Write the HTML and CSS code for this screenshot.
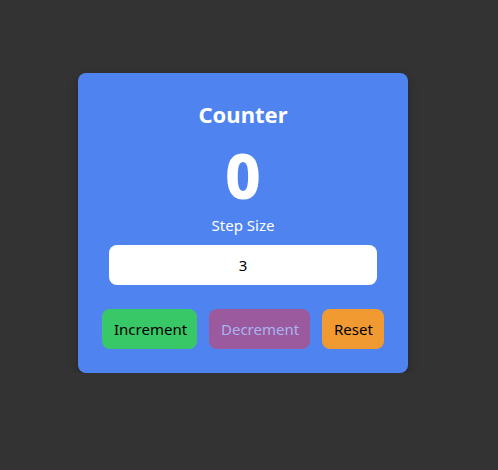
FILE: index.html
```html
<!DOCTYPE html>
<html>
<head>
<meta charset="utf-8">
<link rel="stylesheet" href="styles.css">
</head>
<body>
<div class="page">
  <div class="card">
    <h1 class="title">Counter</h1>
    <div class="count">0</div>
    <label class="label" for="step">Step Size</label>
    <input id="step" class="step" type="number" value="3">
    <div class="buttons">
      <button class="btn inc">Increment</button>
      <button class="btn dec">Decrement</button>
      <button class="btn reset">Reset</button>
    </div>
  </div>
</div>
</body>
</html>
```
FILE: styles.css
```css
html, body {
  margin: 0;
  padding: 0;
  background: #333333;
  font-family: "Noto Sans", "Open Sans", sans-serif;
}
.page {
  padding-top: 73px;
  padding-left: 78px;
}
.card {
  width: 330px;
  height: 300px;
  box-sizing: border-box;
  background: #4f84f0;
  border-radius: 8px;
  box-shadow: 0 4px 10px rgba(0,0,0,0.25);
  display: flex;
  flex-direction: column;
  align-items: center;
  padding-top: 25px;
  color: #ffffff;
}
.title {
  margin: 0;
  font-size: 22px;
  font-weight: 700;
  line-height: 32px;
}
.count {
  margin-top: 13px;
  font-size: 62px;
  font-weight: 800;
  line-height: 64px;
}
.label {
  margin-top: 7px;
  font-size: 15px;
  line-height: 22px;
}
.step {
  margin-top: 9px;
  width: 268px;
  height: 40px;
  box-sizing: border-box;
  border: none;
  border-radius: 8px;
  background: #ffffff;
  text-align: center;
  font-family: inherit;
  font-size: 15px;
  color: #000;
  outline: none;
  -moz-appearance: textfield;
}
.step::-webkit-inner-spin-button,
.step::-webkit-outer-spin-button {
  -webkit-appearance: none;
  margin: 0;
}
.buttons {
  margin-top: 24px;
  display: flex;
  gap: 12px;
}
.btn {
  height: 40px;
  border: none;
  border-radius: 8px;
  padding: 0 12px;
  font-family: inherit;
  font-size: 15px;
  color: #000;
}
.inc { background: #38c868; width: 95px; }
.dec { background: #9b5a9e; color: #a8b4ee; width: 101px; }
.reset { background: #f09a31; width: 62px; }
```
